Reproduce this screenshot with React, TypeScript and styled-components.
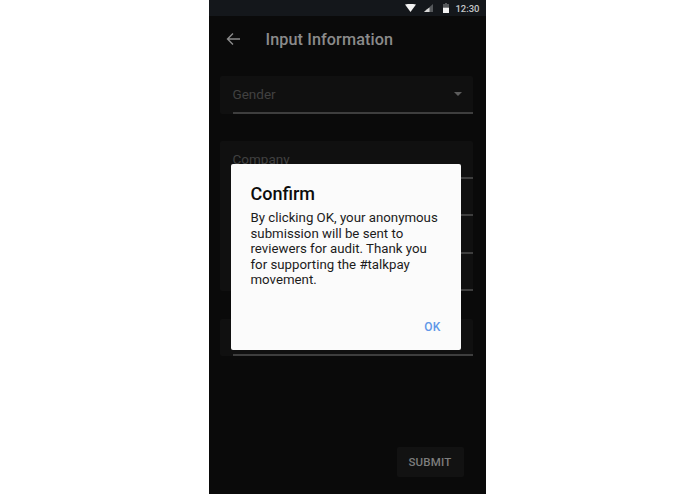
import React from 'react'
import styled, { createGlobalStyle } from 'styled-components'

const GlobalStyle = createGlobalStyle`
  html, body {
    margin: 0;
    padding: 0;
    background: #ffffff;
    font-family: Roboto, "Liberation Sans", sans-serif;
  }
`

const Page = styled.div`
  display: flex;
  justify-content: center;
  height: 494px;
  padding-right: 1px;
  box-sizing: border-box;
`

const Phone = styled.div`
  position: relative;
  display: flex;
  flex-direction: column;
  width: 277px;
  height: 494px;
  overflow: hidden;
  background: #0a0a0a;
`

const StatusBar = styled.div`
  display: flex;
  align-items: center;
  justify-content: flex-end;
  height: 16px;
  padding-right: 6px;
  background: #14171b;
  color: #c4c6c8;
  font-size: 9.5px;
  font-weight: 500;
`

const StatusIcon = styled.svg`
  display: block;
  margin-right: ${(p: { $gap: number }) => p.$gap}px;
`

const Toolbar = styled.div`
  display: flex;
  align-items: center;
  height: 46px;
  padding-left: 17px;
  color: #8b8b8b;
`

const BackIcon = styled.svg`
  display: block;
  margin-right: 26px;
`

const Title = styled.div`
  font-size: 16.2px;
  font-weight: 500;
  letter-spacing: 0.1px;
`

const Form = styled.div`
  display: flex;
  flex-direction: column;
  gap: 27.5px;
  margin: 14px 13px 0 11px;
`

const Card = styled.div`
  display: flex;
  flex-direction: column;
  background: #101010;
  border-radius: 2px;
`

const Field = styled.div`
  display: flex;
  align-items: center;
  justify-content: space-between;
  box-sizing: border-box;
  height: 37.5px;
  margin-left: 13px;
  padding-right: 11px;
  border-bottom: 2px solid #3e3e3e;
  color: #414141;
  font-size: 13.5px;
`

const Caret = styled.span`
  width: 0;
  height: 0;
  border-left: 4px solid transparent;
  border-right: 4px solid transparent;
  border-top: 4px solid #5c5c5c;
`

const Footer = styled.div`
  display: flex;
  justify-content: flex-end;
  margin-top: auto;
  padding: 0 22px 17px 0;
`

const SubmitButton = styled.div`
  display: flex;
  align-items: center;
  justify-content: center;
  width: 67px;
  height: 30px;
  border-radius: 2px;
  background: #121212;
  color: #7d7d7d;
  font-size: 11.5px;
  font-weight: 500;
  letter-spacing: 0.2px;
`

const DialogLayer = styled.div`
  position: absolute;
  top: 164px;
  left: 22px;
`

const Dialog = styled.div`
  display: flex;
  flex-direction: column;
  box-sizing: border-box;
  width: 230px;
  height: 186px;
  padding: 19px 18px 0 20px;
  background: #fbfbfb;
  border-radius: 2px;
`

const DialogTitle = styled.div`
  font-size: 18px;
  font-weight: 500;
  line-height: 22px;
  color: #0c0c0c;
`

const DialogBody = styled.div`
  margin-top: 5px;
  font-size: 13.25px;
  line-height: 15.6px;
  color: #1c1c1c;
`

const DialogActions = styled.div`
  display: flex;
  justify-content: flex-end;
  margin-top: auto;
  padding: 0 2px 16px 0;
`

const OkButton = styled.div`
  color: #5f97e8;
  font-size: 12px;
  font-weight: 500;
  letter-spacing: 0.2px;
`

export default function App() {
  return (
    <>
      <GlobalStyle />
      <Page>
        <Phone>
          <StatusBar>
            <StatusIcon $gap={8} width="11" height="8" viewBox="0 0 11 8">
              <path d="M0 0.5 Q5.5 -0.8 11 0.5 L5.5 8 Z" fill="#f2f2f2" />
            </StatusIcon>
            <StatusIcon $gap={10} width="9" height="8" viewBox="0 0 9 8">
              <path d="M9 0 V8 H0 Z" fill="#55585b" />
              <path d="M5.5 3.5 V8 H0 L3 5.2 Z" fill="#d8d8d8" />
            </StatusIcon>
            <StatusIcon $gap={6} width="6" height="10" viewBox="0 0 6 10">
              <path d="M2 0 H4 V1 H6 V4 H0 V1 H2 Z" fill="#55585b" />
              <path d="M0 4.5 H6 V10 H0 Z" fill="#f2f2f2" />
            </StatusIcon>
            12:30
          </StatusBar>
          <Toolbar>
            <BackIcon width="14" height="14" viewBox="0 0 14 14" fill="none" stroke="#8b8b8b" strokeWidth="1.4">
              <path d="M14 7 H1.5 M7 1.5 L1.5 7 L7 12.5" />
            </BackIcon>
            <Title>Input Information</Title>
          </Toolbar>
          <Form>
            <Card>
              <Field>
                Gender
                <Caret />
              </Field>
            </Card>
            <Card>
              <Field>Company</Field>
              <Field />
              <Field />
              <Field />
            </Card>
            <Card>
              <Field />
            </Card>
          </Form>
          <Footer>
            <SubmitButton>SUBMIT</SubmitButton>
          </Footer>
          <DialogLayer>
            <Dialog>
              <DialogTitle>Confirm</DialogTitle>
              <DialogBody>
                By clicking OK, your anonymous submission will be sent to reviewers for audit. Thank you for supporting the #talkpay movement.
              </DialogBody>
              <DialogActions>
                <OkButton>OK</OkButton>
              </DialogActions>
            </Dialog>
          </DialogLayer>
        </Phone>
      </Page>
    </>
  )
}
